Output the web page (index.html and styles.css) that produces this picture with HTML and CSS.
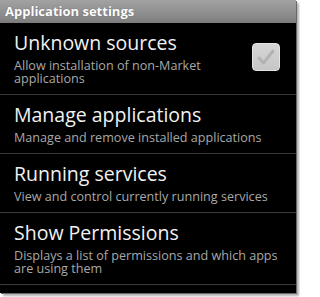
FILE: index.html
```html
<!DOCTYPE html>
<html>
<head>
<meta charset="utf-8">
<link rel="stylesheet" href="styles.css">
</head>
<body>
<div class="screen">
  <div class="header">Application settings</div>
  <div class="row">
    <div class="text">
      <div class="title">Unknown sources</div>
      <div class="summary narrow">Allow installation of non-Market applications</div>
    </div>
    <div class="checkbox">
      <svg width="28" height="28" viewBox="0 0 28 28"><path d="M7 15 L11.5 20 L21 8" fill="none" stroke="#b3b3b3" stroke-width="3" stroke-linecap="round" stroke-linejoin="round"/></svg>
    </div>
  </div>
  <div class="row">
    <div class="text">
      <div class="title">Manage applications</div>
      <div class="summary">Manage and remove installed applications</div>
    </div>
  </div>
  <div class="row">
    <div class="text">
      <div class="title">Running services</div>
      <div class="summary">View and control currently running services</div>
    </div>
  </div>
  <div class="row">
    <div class="text">
      <div class="title">Show Permissions</div>
      <div class="summary">Displays a list of permissions and which apps are using them</div>
    </div>
  </div>
</div>
</body>
</html>
```
FILE: styles.css
```css
html, body {
  margin: 0;
  padding: 0;
  background: #ffffff;
}
body {
  width: 300px;
  height: 297px;
  overflow: hidden;
  font-family: "Open Sans", "DejaVu Sans", sans-serif;
}
.screen {
  width: 296px;
  height: 293px;
  background: #000;
  box-shadow: 1px 1px 0 #6a6a6a, 3px 3px 2px #b0b0b0;
  overflow: hidden;
}
.header {
  height: 23px;
  box-sizing: border-box;
  padding-left: 5px;
  background: linear-gradient(#a2a2a2, #868686 80%, #7a7a7a);
  color: #fff;
  font-weight: bold;
  font-size: 13px;
  line-height: 23px;
  text-shadow: 0 0 1px #555;
}
.row {
  display: flex;
  align-items: center;
  padding: 9px 14px 9px 14px;
  border-bottom: 1px solid #3a3a3a;
}
.text {
  flex: 1;
  min-width: 0;
}
.title {
  color: #f2f2f2;
  font-size: 19.5px;
  line-height: 22px;
  margin-bottom: 5px;
}
.summary {
  color: #a8a8a8;
  font-size: 12.6px;
  line-height: 13px;
}
.summary.narrow {
  padding-right: 40px;
}
.checkbox {
  width: 28px;
  height: 28px;
  box-sizing: border-box;
  border: 1px solid #e4e4e4;
  border-radius: 4px;
  background: linear-gradient(#d6d6d6, #c6c6c6);
  margin-top: -4px;
  margin-right: 2px;
  flex: none;
}
.checkbox svg {
  display: block;
  margin: -1px;
}
```
